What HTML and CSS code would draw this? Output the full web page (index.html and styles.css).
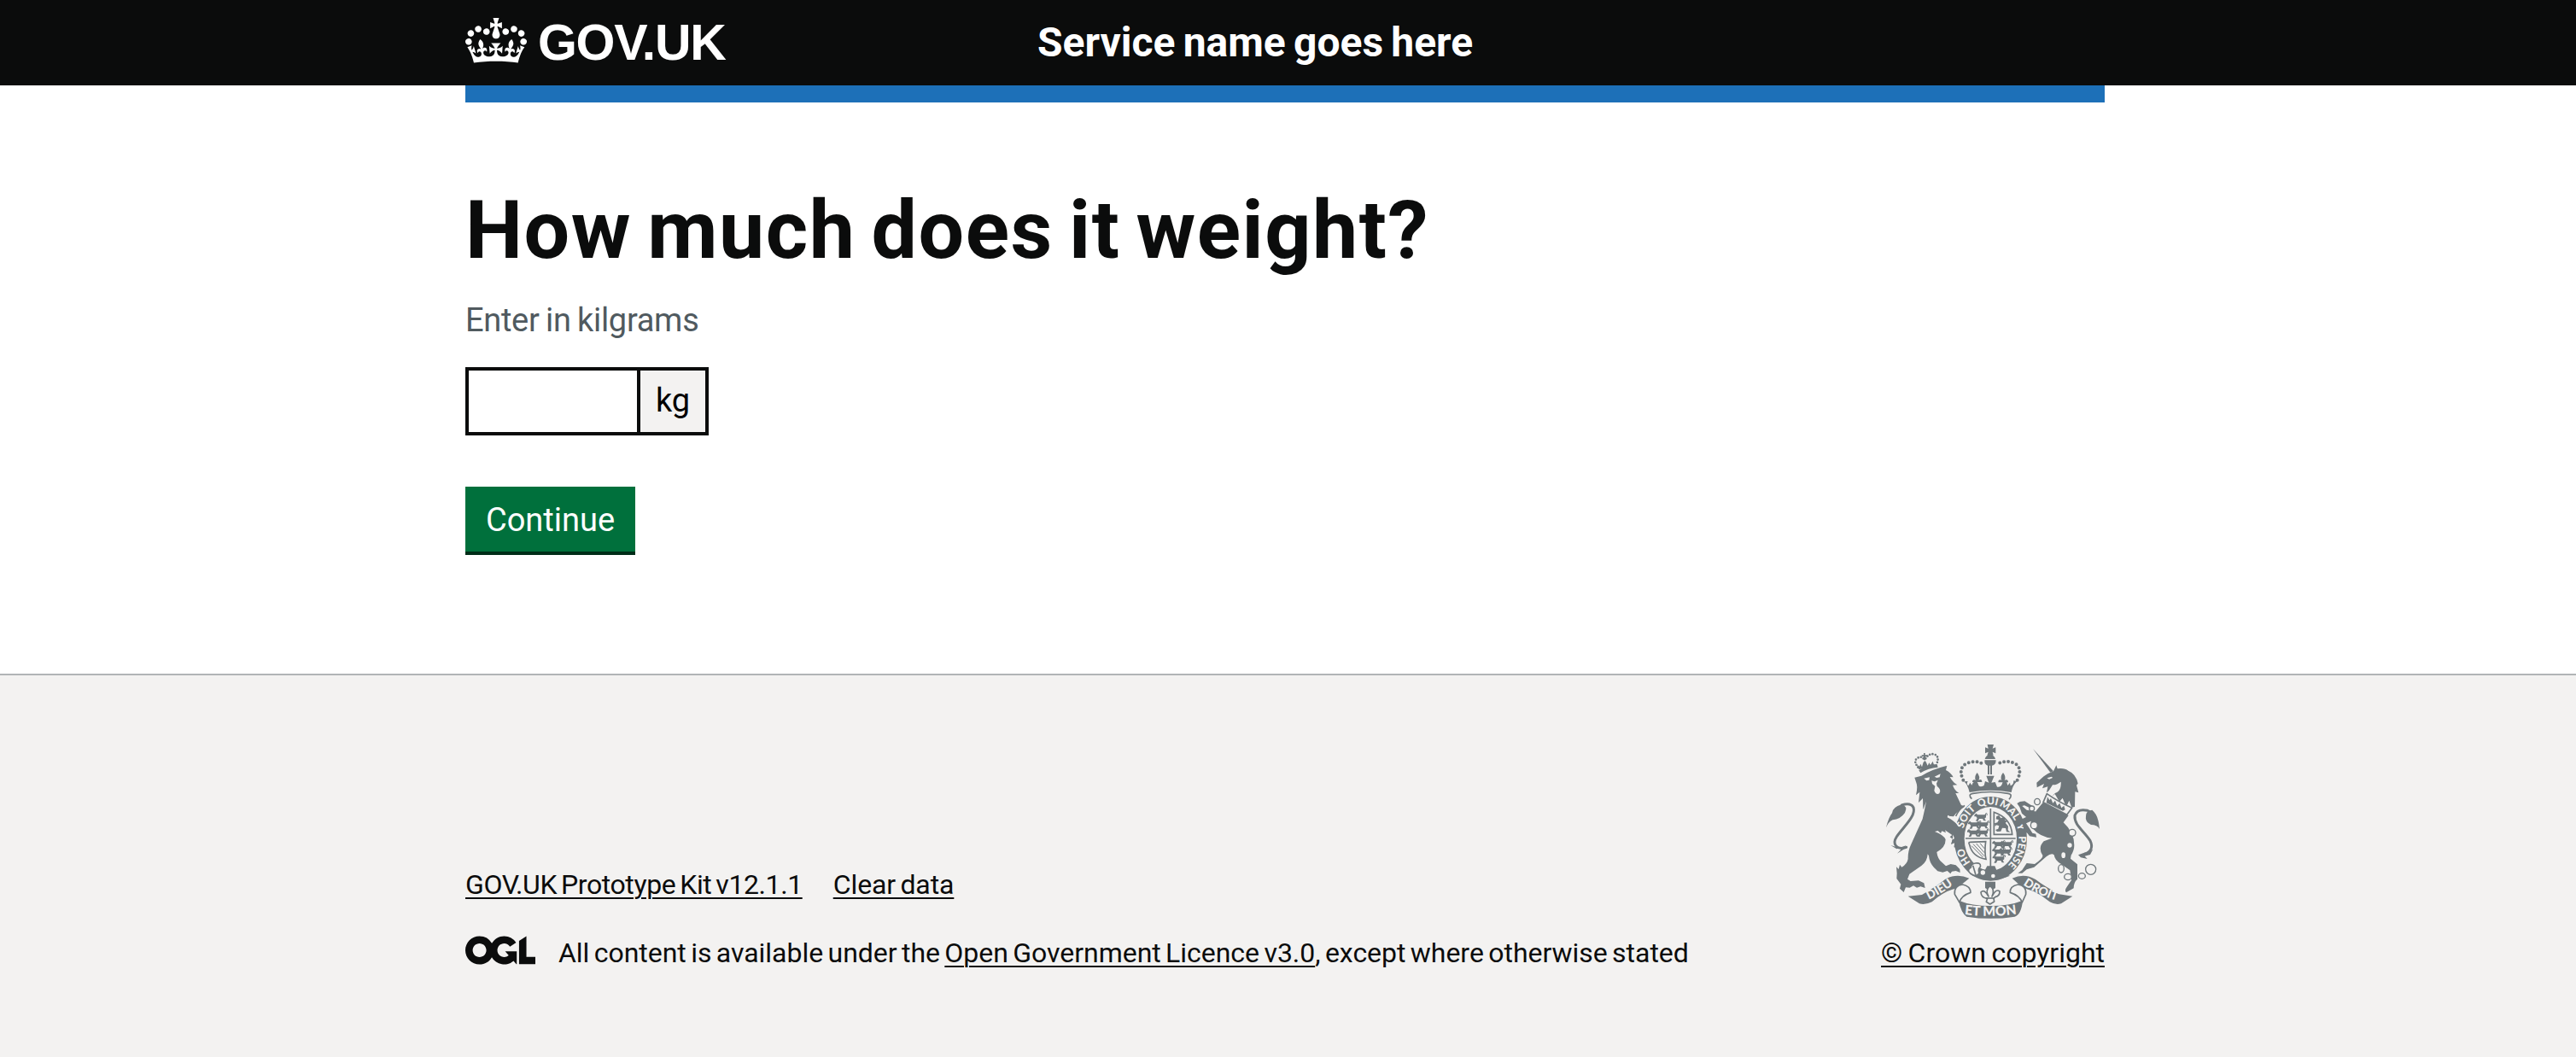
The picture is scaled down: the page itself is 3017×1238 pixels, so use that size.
FILE: index.html
```html
<!DOCTYPE html>
<html lang="en">
<head>
<meta charset="utf-8">
<title>How much does it weight?</title>
<link rel="stylesheet" href="styles.css">
</head>
<body>
<header class="header">
  <div class="container header-inner">
    <a class="logo" href="#">
      <svg class="crown" viewBox="0 0 132 97" aria-hidden="true"><path fill="currentColor" fill-rule="evenodd" d="M25 30.2c3.5 1.5 7.7-.2 9.1-3.7 1.5-3.6-.2-7.8-3.9-9.2-3.6-1.4-7.6.3-9.1 3.9-1.4 3.5.3 7.5 3.9 9zM9 39.5c3.6 1.5 7.8-.2 9.2-3.7 1.5-3.6-.2-7.8-3.9-9.1-3.6-1.5-7.6.2-9.1 3.8-1.4 3.5.3 7.5 3.8 9zM4.4 57.2c3.5 1.5 7.7-.2 9.1-3.8 1.5-3.6-.2-7.7-3.9-9.1-3.5-1.5-7.6.3-9.1 3.8-1.4 3.5.3 7.6 3.9 9.1zm38.3-21.4c3.5 1.5 7.7-.2 9.1-3.8 1.5-3.6-.2-7.7-3.9-9.1-3.6-1.5-7.6.3-9.1 3.8-1.3 3.6.4 7.7 3.9 9.1zm64.4-5.6c-3.6 1.5-7.8-.2-9.1-3.7-1.5-3.6.2-7.8 3.8-9.2 3.6-1.4 7.7.3 9.2 3.9 1.3 3.5-.4 7.5-3.9 9zm15.9 9.3c-3.6 1.5-7.7-.2-9.1-3.7-1.5-3.6.2-7.8 3.7-9.1 3.6-1.5 7.7.2 9.2 3.8 1.5 3.5-.3 7.5-3.8 9zm4.7 17.7c-3.6 1.5-7.8-.2-9.2-3.8-1.5-3.6.2-7.7 3.9-9.1 3.6-1.5 7.7.3 9.2 3.8 1.3 3.5-.4 7.6-3.9 9.1zM89.3 35.8c-3.6 1.5-7.8-.2-9.2-3.8-1.4-3.6.2-7.7 3.9-9.1 3.6-1.5 7.7.3 9.2 3.8 1.4 3.6-.3 7.7-3.9 9.1zM69.7 17.7l8.9 4.7V9.3l-8.9 2.8c-.2-.3-.5-.6-.9-.9L72.4 0H59.6l3.5 11.2c-.3.3-.6.5-.9.9l-8.8-2.8v13.1l8.8-4.7c.3.3.6.7.9.9l-5 15.4v.1c-.2.8-.4 1.6-.4 2.4 0 4.1 3.1 7.5 7 8.1h.2c.3 0 .7.1 1 .1.4 0 .7 0 1-.1h.2c4-.6 7.1-4.1 7.1-8.1 0-.8-.1-1.7-.4-2.4V34l-5.1-15.4c.4-.2.7-.6 1-.9zM66 92.8c16.9 0 32.8 1.1 47.1 3.2 4-16.9 8.9-26.7 14-33.5l-9.6-3.4c1 4.9 1.1 7.2 0 10.2-1.5-1.4-3-4.3-4.2-8.7L108.6 76c2.8-2 5-3.2 7.5-3.3-4.4 9.4-10 11.9-13.6 11.2-4.3-.8-6.3-4.6-5.6-7.9 1-4.7 5.7-5.9 8-.5 4.3-8.7-3-11.4-7.6-8.8 7.1-7.2 7.9-13.5 2.1-21.1-8 6.1-8.1 12.3-4.5 20.8-4.7-5.4-12.1-2.5-9.5 6.2 3.4-5.2 7.9-2 7.2 3.1-.6 4.3-6.4 7.8-13.5 7.2-10.3-.9-10.9-8-11.2-13.8 2.5-.5 7.1 1.8 11 7.3L80.2 60c-4.1 4.4-8 5.3-12.3 5.4 1.4-4.4 8-11.6 8-11.6H55.5s6.4 7.2 7.9 11.6c-4.2-.1-8-1-12.3-5.4l1.4 16.4c3.9-5.5 8.5-7.7 10.9-7.3-.3 5.8-.9 12.8-11.1 13.8-7.2.6-12.9-2.9-13.5-7.2-.7-5 3.8-8.3 7.1-3.1 2.7-8.7-4.6-11.6-9.4-6.2 3.7-8.5 3.6-14.7-4.6-20.8-5.8 7.6-5 13.9 2.2 21.1-4.7-2.6-11.9.1-7.7 8.8 2.3-5.5 7.1-4.2 8.1.5.7 3.3-1.3 7.1-5.7 7.9-3.5.7-9-1.8-13.5-11.2 2.5.1 4.7 1.3 7.5 3.3l-4.7-15.4c-1.2 4.4-2.7 7.2-4.3 8.7-1.1-3-.9-5.3 0-10.2l-9.5 3.4c5 6.9 9.9 16.7 14 33.5 14.8-2.1 30.8-3.2 47.7-3.2z"/></svg>
      <span class="logo-text">GOV.UK</span>
    </a>
    <a class="service-name" href="#">Service name goes here</a>
  </div>
</header>
<main class="main">
  <div class="container">
    <div class="phase-bar"></div>
    <form class="form">
      <h1 class="heading"><label for="weight">How much does it weight?</label></h1>
      <p class="hint">Enter in kilgrams</p>
      <div class="input-group">
        <input class="input" id="weight" type="text">
        <span class="suffix">kg</span>
      </div>
      <button class="button" type="button">Continue</button>
    </form>
  </div>
</main>
<footer class="footer">
  <div class="container footer-inner">
    <div class="meta">
      <nav class="links">
        <a class="link link-kit" href="#">GOV.UK Prototype Kit v12.1.1</a>
        <a class="link link-clear" href="#">Clear data</a>
      </nav>
      <div class="licence">
        <svg class="ogl" viewBox="0 0 483.2 195.7" aria-hidden="true"><path fill="currentColor" d="M421.5 142.8V.1l-50.7 32.3v161.1h112.4v-50.7zm-122.3-9.6A47.12 47.12 0 0 1 221 97.8c0-26 21.1-47.1 47.1-47.1 16.7 0 31.4 8.7 39.7 21.8l42.7-27.2A97.63 97.63 0 0 0 268.1 0c-36.5 0-68.3 20.1-85.1 49.7A98 98 0 0 0 97.8 0C43.9 0 0 43.9 0 97.8s43.9 97.8 97.8 97.8c36.5 0 68.3-20.1 85.1-49.7a97.76 97.76 0 0 0 149.6 25.4l19.4 22.2h3v-87.8h-80l24.3 27.5zM97.8 145c-26 0-47.1-21.1-47.1-47.1s21.1-47.1 47.1-47.1 47.1 21.1 47.1 47.1S123.8 145 97.8 145"/></svg>
        <p class="licence-text">All content is available under the <a class="link" href="#">Open Government Licence v3.0</a>, except where otherwise stated</p>
      </div>
    </div>
    <div class="copyright">
      <svg class="crest" viewBox="57 36 750 612" aria-hidden="true">
        <defs>
          <path id="garter" d="M424 485A99 119 0 0 1 424 247A99 119 0 0 1 424 485"/>
          <path id="dieu" d="M196 586Q254 560 302 522"/>
          <path id="mon" d="M330 633Q424 645 518 631"/>
          <path id="droit" d="M532 525Q594 568 662 586"/>
          <g id="walking-lion">
            <path d="M0 8l6-6 6 5h24l5-5v14l-5 4 5 8h-8l-4-7H17l-4 8H5l5-10-4-6H0z"/>
            <path d="M38 5q8-9 6 4M16 12l12 1" fill="none" stroke="currentColor" stroke-width="3"/>
          </g>
        </defs>

        <!-- lion -->
        <g class="ink">
          <path d="M172 127Q200 105 236 105L239 116Q205 118 178 136Z"/>
          <path d="M172 124l-7-18 9 7 4-9 5 11 5-17 6-5 4 6 5 12 5-11 5 8 8-13 5 15z"/>
          <path d="M182 73h7v-7h5v7h8v6h-7v12h-6V79h-7z"/>
          <path d="M157 152L181 146Q220 123 266 112L271 111 267 126Q284 134 293 151L281 150Q291 169 307 178L291 179Q298 198 313 207L301 207 321 249Q330 251 333 254Q306 270 294 289L274 287Q304 304 320 340L329 390 315 396 313 383 304 394 299 380 285 386 291 368 281 361 289 354 275 344 264 337 267 346 253 340 249 348 239 339 228 342Q260 354 266 370Q266 398 235 414Q238 439 254 451L267 463 284 456 302 460 316 474 317 486 302 480 288 482 283 490 272 480 256 485 238 481 225 468Q209 451 207 427L203 421Q202 447 181 462L139 491 132 509 143 516 171 514 190 523 194 540 178 535 165 539 153 532 140 539 126 538 119 555 105 542 109 527 94 507 95 488 93 466 101 474 105 458 112 467Q131 456 134 438Q133 411 145 386L185 298Q191 272 198 236L187 265 186 225 171 240 175 203 162 214Q169 184 163 170Z"/>
        </g>
        <path class="tail" d="M128 397C96 408 76 388 94 360C116 327 163 288 153 257Q143 239 112 249"/>
        <path class="ink" d="M57 328Q65 294 78 277Q80 256 111 247Q135 253 123 276Q107 299 80 301Q64 309 57 328ZM73 390L94 403 127 391 118 405 96 419 112 402Z"/>
        <path class="paper" d="M190 155l20-4-2 10-9 2zM227 149l21-10-3 12-10 2zM217 163l10 3 12-5-5 12 2 9Q253 196 244 208Q232 214 226 198L229 182 219 174Z"/>
        <path class="beads small" d="M169 116Q152 94 166 85Q180 73 192 90M196 85Q207 67 226 70Q246 78 235 103"/>

        <!-- unicorn -->
        <g class="ink">
          <path d="M573 51L645 130 634 134Z"/>
          <path d="M645 130L655 109 659 121Q685 118 697 128Q724 139 731 173L726 179 733 205 721 202 720 255 709 257 700 233 690 256 677 224 666 237 650 210 639 219Q665 196 671 169L651 184 621 205 625 184 606 190 612 174 587 187 586 170 611 148Q623 138 645 130Z"/>
          <path d="M608 240L698 285 680 310Q718 345 718 390Q718 408 707 425L705 437 729 457 729 509Q716 520 716 541L690 556Q682 549 694 533L708 513 703 478 671 455Q650 444 647 424Q638 416 620 430L577 467 551 475 535 488 520 488 535 477 551 453 579 456Q613 433 606 424Q590 398 611 376L640 365Q598 361 570 329L565 310 585 268Z"/>
          <path d="M807 333Q799 318 777 318Q755 307 759 288Q758 268 781 266Q796 279 801 299Q804 307 807 333ZM732 424L753 416 773 412 784 404 774 423 755 428 764 438 741 433Z"/>
        </g>
        <path class="tail" d="M754 421Q790 408 774 374C751 338 717 320 720 285Q729 260 765 268Q779 273 781 285"/>
        <path class="paper" d="M622 154l17-5 3 4-12 5zM671 167Q656 179 642 178L624 206Q674 216 671 167Z"/>
        <path class="paper-outline" d="M622 209Q660 236 710 259L692 283 609 239Z"/>
        <path class="ink" d="M624 220l7 12 5-7 7 17 8-9 7 18 9-9 6 17 9-8 4 14-8 4-58-28z"/>

        <!-- crown -->
        <g class="ink">
          <path d="M413 36h22l-4 14 11-4v21l-11-5 3 12h-22l4-12-11 5V46l11 4zM404 87Q407 73 422 72Q438 73 441 87ZM403 91h40q0 18-14 19v31h-6v-31h-3v31h-6v-31q-12-3-11-19z"/>
          <path d="M331 166Q344 178 350 204Q424 190 497 204Q501 180 517 165L505 163Q505 178 494 181L492 170 484 180 480 166Q469 158 465 173Q461 187 447 185L443 175 440 168 427 170 437 146H409L418 170 405 165 401 180Q383 190 380 173Q375 158 362 170L358 179 352 170 346 181Q338 176 344 165Z"/>
          <path d="M377 135Q389 150 382 161Q394 155 394 168H360Q360 157 372 161Q365 149 377 135ZM468 135Q480 149 473 161Q486 156 486 169H451Q451 157 463 161Q456 149 468 135Z"/>
        </g>
        <path class="beads" d="M328 161Q309 121 337 104Q370 87 402 107M518 161Q538 119 510 103Q476 87 444 107"/>
        <path class="thin" d="M358 227Q343 211 362 208Q424 197 485 208Q504 211 489 229"/>

        <!-- garter and shield -->
        <ellipse class="paper" cx="424" cy="366" rx="133" ry="150"/>
        <path class="thin" d="M302 288Q311 266 333 250M300 382l-2 15"/>
        <ellipse class="ring" cx="424" cy="367" rx="110" ry="130"/>
        <text class="motto"><textPath href="#garter" startOffset="16%">HO</textPath></text>
        <text class="motto"><textPath href="#garter" startOffset="36%">SOIT</textPath></text>
        <text class="motto"><textPath href="#garter" startOffset="48.7%">QUI</textPath></text>
        <text class="motto"><textPath href="#garter" startOffset="60%">MAL</textPath></text>
        <text class="motto"><textPath href="#garter" startOffset="69.5%">Y</textPath></text>
        <text class="motto"><textPath href="#garter" startOffset="82%">PENSE</textPath></text>
        <path class="thin" d="M424 261V465M336 366H512"/>
        <g class="ink">
          <use href="#walking-lion" x="367" y="276"/><use href="#walking-lion" x="345" y="303"/><use href="#walking-lion" x="374" y="303"/><use href="#walking-lion" x="342" y="331"/><use href="#walking-lion" x="373" y="331"/>
          <use href="#walking-lion" x="430" y="372"/><use href="#walking-lion" x="458" y="372"/><use href="#walking-lion" x="430" y="398"/><use href="#walking-lion" x="454" y="398"/><use href="#walking-lion" x="431" y="423"/>
          <path d="M445 288l9-3 6 10 12-5 3 12 8 4-7 5 10 12-1 14 8 7-13-1-3-13-12-1-5 12-13 1-6-6 10-4 3-10-9-3-5 5-2-11 10-3 5-9-10-3z"/>
          <path d="M412 463h27l6 15-21 6-20-6z"/>
        </g>
        <path class="thin" d="M436 274Q496 295 500 352H436ZM352 379L407 377Q402 413 408 439Q360 431 350 388Q345 379 352 379"/>
        <path class="hair" d="M363 386l39 42M374 384l28 32M387 383l16 19M357 392l40 40"/>
        <path class="ink" d="M370 470L447 483 492 497Q424 525 362 493Z"/>
        <path class="paper-outline" d="M371 453Q391 450 388 466Q379 473 384 488Q373 505 353 489Q339 476 355 468Q356 455 371 453Z"/>
        <path class="thin" d="M362 461l10 33"/>
        <circle class="paper" cx="397" cy="486" r="8"/><circle class="paper" cx="433" cy="498" r="7"/>

        <!-- forelegs over the garter -->
        <path class="ink" d="M269 285Q313 303 326 370L331 388 317 397 314 384 304 394 300 381 286 386 290 370 299 367 278 330Z"/>
        <path class="paper" d="M274 284Q302 300 315 320L312 324Q295 302 272 292Z"/>
        <g class="ink">
          <path d="M517 243L527 237 544 235 572 253 562 259 543 250 535 252 551 266 590 272 590 300 560 300 534 278 526 256Z"/>
          <path d="M590 285L555 288 530 300 533 314 541 322 538 338 553 347 561 358 585 362 583 350 571 347 560 329 549 313 566 305 590 325Z"/>
        </g>
        <g class="rings"><ellipse cx="588" cy="237" rx="10" ry="11"/><circle cx="569" cy="261" r="9"/><circle cx="577" cy="320" r="12"/><circle cx="711" cy="346" r="12"/><ellipse cx="672" cy="472" rx="10" ry="14"/><ellipse cx="696" cy="501" rx="13" ry="11"/><circle cx="776" cy="475" r="18"/><ellipse cx="745" cy="498" rx="12" ry="10"/></g>
        <g class="paper"><circle cx="702" cy="390" r="8"/><ellipse cx="680" cy="425" rx="7" ry="10"/></g>

        <!-- motto ribbon -->
        <path class="ink" d="M134 569L183 564Q238 532 264 510Q304 486 349 506L321 529 328 538Q272 541 218 589Q194 601 174 595ZM712 569L665 562Q610 532 582 510Q543 486 500 506L525 529 518 538Q576 541 632 589Q653 601 672 595Z"/>
        <path class="paper-outline" d="M326 528Q295 532 298 562L315 591Q320 567 354 556Q354 534 326 528ZM520 528Q551 532 548 562L535 591Q527 567 493 556Q491 534 520 528Z"/>
        <path class="ink" d="M312 584Q358 603 424 603Q490 603 537 584Q532 633 509 641Q424 654 340 641Q320 627 312 584ZM405 518h36v22l-18 12-18-12z"/>
        <path class="paper-outline" d="M422 532Q441 548 429 570Q443 541 456 552Q457 568 440 572L435 577 437 588 422 597 409 589 413 577Q391 575 390 555Q402 542 417 570Q404 549 422 532Z"/>
        <path class="thin" d="M407 576h31"/>
        <text class="motto fold"><textPath href="#dieu" startOffset="50%">DIEU</textPath></text>
        <text class="motto ribbon"><textPath href="#mon" startOffset="50%">ET MON</textPath></text>
        <text class="motto fold"><textPath href="#droit" startOffset="50%">DROIT</textPath></text>
      </svg>
      <a class="link link-copyright" href="#">© Crown copyright</a>
    </div>
  </div>
</footer>
</body>
</html>
```
FILE: styles.css
```css
* { box-sizing: border-box; }

body {
  margin: 0;
  min-height: 1238px;
  display: flex;
  flex-direction: column;
  background: #fff;
  color: #0b0c0c;
  font-family: Roboto, "Liberation Sans", sans-serif;
  font-size: 32px;
}

.header, .main, .footer { padding-right: 7px; }
.container { width: 1920px; margin: 0 auto; }

.header { height: 100px; background: #0b0c0c; color: #fff; }
.header-inner { display: flex; height: 100px; align-items: center; }
.logo {
  display: flex;
  width: 670px;
  color: inherit;
  text-decoration: none;
  align-items: center;
}
.crown { width: 72px; height: 53px; margin: -5px 13px 0 0; }
.logo-text {
  font-family: "Liberation Sans", Arial, sans-serif;
  font-size: 59px;
  font-weight: 700;
  line-height: 60px;
  letter-spacing: -1.3px;
}
.service-name {
  color: inherit;
  font-size: 48px;
  font-weight: 700;
  line-height: 60px;
  text-decoration: none;
  word-spacing: -2.7px;
}

.phase-bar { height: 20px; background: #1d70b8; }
.main { height: 689px; }
.form {
  display: flex;
  padding-top: 100px;
  flex-direction: column;
  align-items: flex-start;
}
.heading {
  margin: 0;
  font-size: 95px;
  font-weight: 700;
  line-height: 100px;
  letter-spacing: 1.5px;
  word-spacing: -6.9px;
  white-space: nowrap;
}
.hint {
  margin: 30px 0;
  color: #505a5f;
  font-size: 38px;
  line-height: 50px;
  letter-spacing: -.3px;
  word-spacing: -1.7px;
}
.input-group { display: flex; height: 80px; }
.input {
  width: 205px;
  border: 4px solid #0b0c0c;
  border-radius: 0;
  background: #fff;
  font: inherit;
}
.suffix {
  display: flex;
  width: 80px;
  padding-bottom: 2px;
  border: 4px solid #0b0c0c;
  border-left: 0;
  background: #f3f2f1;
  color: #000;
  font-size: 38px;
  align-items: center;
  justify-content: center;
}
.button {
  width: 199px;
  height: 80px;
  margin: 60px 0 0;
  padding: 0 0 2px;
  border: 0;
  border-radius: 0;
  background: #00703c;
  box-shadow: inset 0 -4px #002d18;
  color: #fff;
  font: 400 38px/78px Roboto, "Liberation Sans", sans-serif;
}

.footer {
  border-top: 2px solid #b1b4b6;
  background: #f3f2f1;
  flex: 1;
}
.footer-inner {
  display: flex;
  padding-top: 81px;
  align-items: flex-end;
  justify-content: space-between;
  word-spacing: -2.5px;
}
.links { display: flex; margin-bottom: 40px; gap: 36px; line-height: 40px; }
.link-kit { letter-spacing: -.42px; }
.link-clear { letter-spacing: -.1px; }
.licence { display: flex; align-items: flex-start; }
.ogl { width: 82px; height: 34px; margin: 0 27px 0 0; }
.licence-text { margin: 0; line-height: 40px; letter-spacing: -.03px; white-space: nowrap; }
.link {
  color: inherit;
  text-decoration: underline;
  text-decoration-thickness: 2px;
  text-underline-offset: 4px;
}
.link-copyright { word-spacing: -1.5px; }
.copyright {
  display: flex;
  flex-direction: column;
  align-items: flex-end;
  line-height: 40px;
}
.crest { width: 250px; height: 204px; margin: 0 6px 20px 0; color: #6f777b; word-spacing: 0; }

.ink { fill: currentColor; }
.paper { fill: #f3f2f1; }
.paper-outline { fill: #f3f2f1; stroke: currentColor; stroke-width: 5; stroke-linejoin: round; }
.thin { fill: none; stroke: currentColor; stroke-width: 5; }
.hair { fill: none; stroke: currentColor; stroke-width: 3; }
.tail { fill: none; stroke: currentColor; stroke-width: 9; stroke-linecap: round; }
.rings { fill: #f3f2f1; stroke: currentColor; stroke-width: 4; }
.ring { fill: none; stroke: currentColor; stroke-width: 36; }
.beads { fill: none; stroke: currentColor; stroke-width: 12; stroke-linecap: round; stroke-dasharray: 0 15; }
.small { stroke-width: 8; stroke-dasharray: 0 10; }
.motto { fill: #f3f2f1; font: 900 36px Lato, sans-serif; text-anchor: middle; }
.ribbon { font-size: 47px; }
.fold { font-size: 42px; }
```
